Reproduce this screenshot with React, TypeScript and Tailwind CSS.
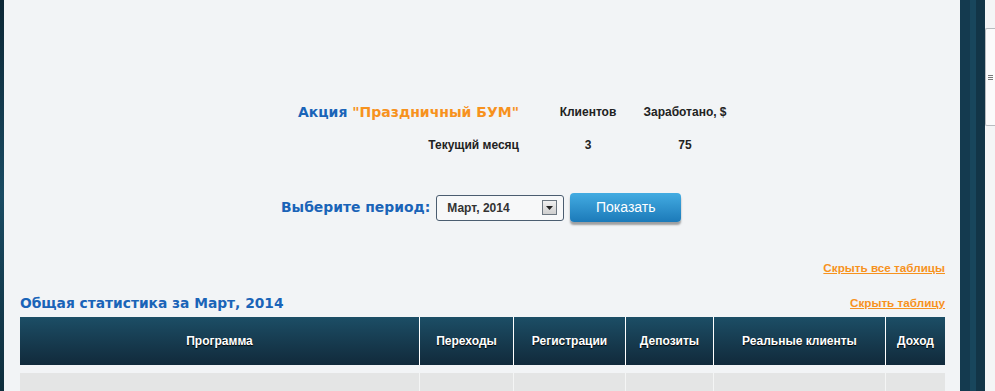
import React from 'react';

const columns = [
  { title: 'Программа', w: 'w-[399px]' },
  { title: 'Переходы', w: 'w-[94px]' },
  { title: 'Регистрации', w: 'w-[112px]' },
  { title: 'Депозиты', w: 'w-[88px]' },
  { title: 'Реальные клиенты', w: 'w-[172px]' },
  { title: 'Доход', w: 'w-[60px]' },
];

const App: React.FC = () => {
  return (
    <div className="flex h-[391px] w-[995px] overflow-hidden bg-[#f2f4f6] font-['Liberation_Sans',Arial,sans-serif]">
      {/* left dark edge */}
      <div className="w-[4px] shrink-0 bg-gradient-to-b from-[#0c2735] via-[#1a4b63] to-[#0e2d3c]" />

      {/* main content */}
      <div className="flex-1 pl-[16px] pr-[15px]">
        {/* promo stats */}
        <div className="mt-[102px] ml-[259px] grid grid-cols-[262px_94px_100px]">
          <div className="pr-[22px] text-right font-['DejaVu_Sans',Verdana,sans-serif] text-[14px] font-bold leading-[20px] text-[#1a64b8]">
            Акция <span className="text-[#f7921e]">"Праздничный БУМ"</span>
          </div>
          <div className="text-center text-[12px] font-bold leading-[20px] text-[#222]">Клиентов</div>
          <div className="text-center text-[12px] font-bold leading-[20px] text-[#222]">Заработано, $</div>
          <div className="mt-[13px] pr-[22px] text-right text-[12px] font-bold leading-[20px] text-[#222]">Текущий месяц</div>
          <div className="mt-[13px] text-center text-[12px] font-bold leading-[20px] text-[#222]">3</div>
          <div className="mt-[13px] text-center text-[12px] font-bold leading-[20px] text-[#222]">75</div>
        </div>

        {/* period selector */}
        <div className="mt-[38px] ml-[261px] flex items-center">
          <span className="font-['DejaVu_Sans',Verdana,sans-serif] text-[13.9px] font-bold text-[#1a64b8]">
            Выберите период:
          </span>
          <div className="ml-[6px] flex h-[26px] w-[128px] items-center justify-between rounded-[3px] border border-[#4b5d70] bg-[#f7f8f9] pl-[10px] pr-[6px]">
            <span className="text-[12px] font-bold text-[#333]">Март, 2014</span>
            <span className="flex h-[15px] w-[15px] items-center justify-center border border-[#6b7680] bg-gradient-to-b from-[#f0f0f0] to-[#cfcfcf]">
              <svg width="7" height="4" viewBox="0 0 7 4">
                <path d="M0 0h7L3.5 4z" fill="#222" />
              </svg>
            </span>
          </div>
          <button className="ml-[6px] h-[29px] w-[111px] rounded-[4px] bg-gradient-to-b from-[#43ace2] to-[#1b7ab9] text-[14px] text-white shadow-[0_3px_2px_rgba(0,0,0,0.35)]">
            Показать
          </button>
        </div>

        {/* hide all */}
        <div className="mt-[36px] text-right text-[11.7px] font-bold leading-[20px] text-[#f7921e] underline">
          Скрыть все таблицы
        </div>

        {/* table title */}
        <div className="mt-[16px] flex items-end justify-between">
          <span className="font-['DejaVu_Sans',Verdana,sans-serif] text-[13.8px] font-bold leading-[18px] text-[#1a64b8]">
            Общая статистика за Март, 2014
          </span>
          <span className="text-[11.7px] font-bold leading-[18px] text-[#f7921e] underline">Скрыть таблицу</span>
        </div>

        {/* table */}
        <div className="mt-[5px] flex h-[48px] bg-gradient-to-b from-[#1c4e66] to-[#112a3b]">
          {columns.map((c, i) => (
            <div
              key={c.title}
              className={`${c.w} flex items-center justify-center text-[12px] font-bold text-white [text-shadow:0_1px_1px_#000] ${i > 0 ? 'border-l border-white' : ''}`}
            >
              {c.title}
            </div>
          ))}
        </div>
        <div className="mt-[8px] flex h-[30px] bg-[#e4e5e5]">
          {columns.map((c, i) => (
            <div key={c.title} className={`${c.w} ${i > 0 ? 'border-l border-[#f4f5f5]' : ''}`} />
          ))}
        </div>
      </div>

      {/* right dark column */}
      <div className="flex w-[25px] shrink-0">
        <div className="w-[10px] bg-[#143a4f]" />
        <div className="w-[6px] bg-[#18465c]" />
        <div className="w-[9px] bg-[#123547]" />
      </div>

      {/* scrollbar */}
      <div className="w-[10px] shrink-0 bg-[#f4f5f6] pt-[28px]">
        <div className="flex h-[98px] items-center justify-center rounded-l-[2px] border border-r-0 border-[#b8bcc0] bg-[#fbfbfb]">
          <div className="flex flex-col gap-[1px]">
            <div className="h-px w-[5px] bg-[#777]" />
            <div className="h-px w-[5px] bg-[#777]" />
            <div className="h-px w-[5px] bg-[#777]" />
          </div>
        </div>
      </div>
    </div>
  );
};

export default App;
